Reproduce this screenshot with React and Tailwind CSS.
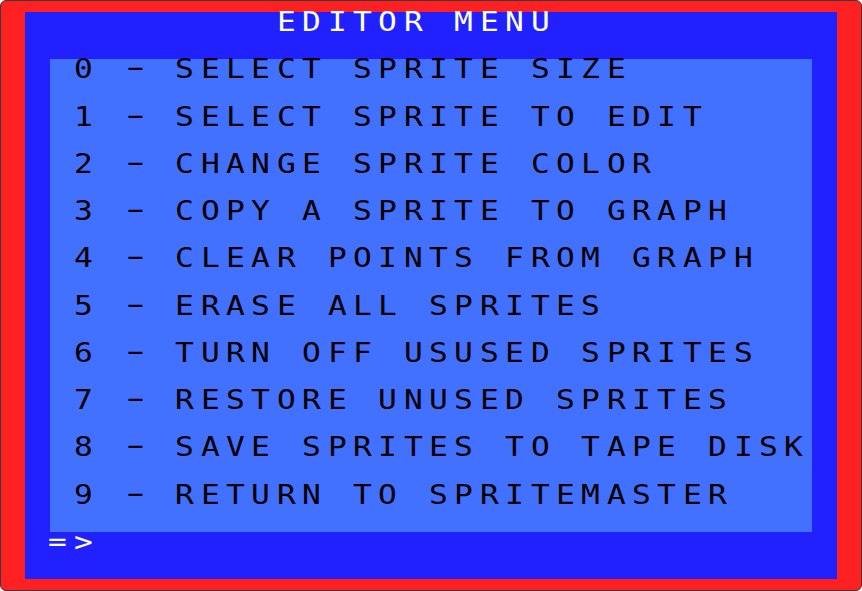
import React from 'react';

const items = [
  '0 - SELECT SPRITE SIZE',
  '1 - SELECT SPRITE TO EDIT',
  '2 - CHANGE SPRITE COLOR',
  '3 - COPY A SPRITE TO GRAPH',
  '4 - CLEAR POINTS FROM GRAPH',
  '5 - ERASE ALL SPRITES',
  '6 - TURN OFF USUSED SPRITES',
  '7 - RESTORE UNUSED SPRITES',
  '8 - SAVE SPRITES TO TAPE DISK',
  '9 - RETURN TO SPRITEMASTER',
];

// one character cell = 25.375px wide, one text row = 23.625px tall
function Line({ text, className = '' }) {
  return (
    <div className={`h-[23.625px] flex font-['DejaVu_Sans_Mono',monospace] text-[26px] leading-[21px] ${className}`}>
      {text.split('').map((c, i) => (
        <span key={i} className="w-[25.375px] shrink-0 inline-block">
          <span
            className={
              c === '-'
                ? 'inline-block scale-x-[2.1] origin-left -ml-[8px] -translate-y-[2px]'
                : 'inline-block scale-x-[1.2] origin-left -ml-[2px]'
            }
          >
            {c === ' ' ? '\u00a0' : c}
          </span>
        </span>
      ))}
    </div>
  );
}

export default function App() {
  return (
    <div className="w-[862px] h-[591px] bg-[#ff2121] border border-[#3a3a3a] rounded-[6px] overflow-hidden px-[24px] py-[11px]">
      <div className="w-[812px] h-[567px] bg-[#2121ff] flex flex-col">
        {/* title */}
        <Line text="EDITOR MENU" className="pl-[253.75px] text-white" />
        <div className="h-[23.625px]" />

        {/* menu panel */}
        <div className="mx-[25.375px] h-[472.5px] bg-[#4270ff] flex flex-col">
          {items.map((t) => (
            <div key={t} className="h-[47.25px]">
              <Line text={t} className="pl-[25.375px] text-black" />
            </div>
          ))}
        </div>

        {/* prompt */}
        <Line text="=>" className="pl-[25.375px] text-white" />
      </div>
    </div>
  );
}
